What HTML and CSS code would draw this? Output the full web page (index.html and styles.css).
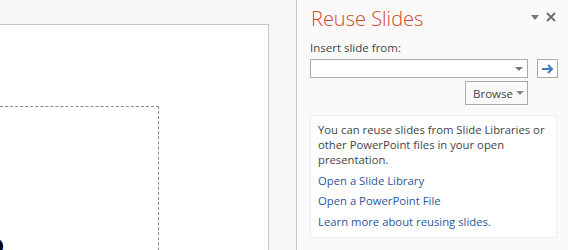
FILE: index.html
```html
<!DOCTYPE html>
<html lang="en">
<head>
    <meta charset="UTF-8">
    <title>Reuse Slides</title>
    <link rel="stylesheet" href="styles.css">
</head>
<body>
    <div class="app">
        <!-- slide editing area -->
        <div class="stage">
            <div class="slide">
                <div class="placeholder">
                    <span class="ph-text">o</span>
                </div>
            </div>
        </div>

        <!-- task pane -->
        <div class="pane">
            <div class="pane-head">
                <h1 class="pane-title">Reuse Slides</h1>
                <div class="pane-tools">
                    <span class="pane-menu"></span>
                    <svg class="pane-close" width="10" height="10" viewBox="0 0 10 10">
                        <path d="M1 1L9 9M9 1L1 9" stroke="#6a6a6a" stroke-width="1.8"/>
                    </svg>
                </div>
            </div>

            <label class="field-label">Insert slide from:</label>
            <div class="field-row">
                <div class="combo"><span class="caret"></span></div>
                <button class="go-btn">
                    <svg width="14" height="12" viewBox="0 0 14 12">
                        <path d="M1 6H11M7 2L11 6L7 10" stroke="#3d7cc4" stroke-width="2" fill="none"/>
                    </svg>
                </button>
            </div>
            <div class="browse-row">
                <button class="browse-btn">Browse <span class="caret"></span></button>
            </div>

            <div class="info">
                <p>You can reuse slides from Slide Libraries or other PowerPoint files in your open presentation.</p>
                <a href="#" class="link">Open a Slide Library</a>
                <a href="#" class="link">Open a PowerPoint File</a>
                <a href="#" class="link more">Learn more about reusing slides.</a>
            </div>
        </div>
    </div>
</body>
</html>
```

FILE: styles.css
```css
/* base */
body {
    margin: 0;
    font-family: "Open Sans", "Noto Sans", sans-serif;
    color: #444;
    overflow: hidden;
}
.app {
    display: flex;
    width: 568px;
    height: 250px;
}

/* slide area */
.stage {
    width: 297px;
    background: #f6f6f6;
    border-right: 1px solid #c8c8c8;
    padding-top: 24px;
    box-sizing: border-box;
    overflow: hidden;
}
.slide {
    width: 269px;
    height: 240px;
    background: #fff;
    border-top: 1px solid #c6c6c6;
    border-right: 1px solid #c6c6c6;
    box-sizing: border-box;
    position: relative;
    overflow: hidden;
}
.placeholder {
    position: absolute;
    left: -10px;
    top: 81px;
    width: 169px;
    height: 200px;
    border: 1px dashed #8a8a8a;
    box-sizing: border-box;
}
.ph-text {
    position: absolute;
    left: -4px;
    top: 122px;
    font-family: "Liberation Sans", sans-serif;
    font-weight: bold;
    font-size: 28px;
    color: #000;
}

/* task pane */
.pane {
    flex: 1;
    background: #fafafa;
    padding: 0 10px 0 13px;
}
.pane-head {
    display: flex;
    justify-content: space-between;
    align-items: flex-start;
}
.pane-title {
    margin: 6px 0 0 1px;
    font-weight: 300;
    font-size: 20px;
    color: #d24726;
    line-height: 26px;
}
.pane-tools {
    display: flex;
    align-items: center;
    gap: 7px;
    margin-top: 12px;
    margin-right: 2px;
}
.pane-menu {
    width: 0;
    height: 0;
    border-left: 4px solid transparent;
    border-right: 4px solid transparent;
    border-top: 5px solid #777;
}
.pane-close {
    display: block;
}
.field-label {
    display: block;
    margin-top: 8px;
    font-size: 11.5px;
    line-height: 16px;
    color: #444;
}
.field-row {
    display: flex;
    gap: 9px;
    margin-top: 3px;
}
.combo {
    width: 218px;
    height: 19px;
    border: 1px solid #ababab;
    background: #fff;
    box-sizing: border-box;
    display: flex;
    justify-content: flex-end;
    align-items: center;
    padding-right: 4px;
}
.caret {
    display: inline-block;
    width: 0;
    height: 0;
    border-left: 4px solid transparent;
    border-right: 4px solid transparent;
    border-top: 4px solid #777;
}
.go-btn {
    width: 21px;
    height: 19px;
    border: 1px solid #ababab;
    background: #fff;
    padding: 0;
    box-sizing: border-box;
    display: flex;
    align-items: center;
    justify-content: center;
}
.browse-row {
    width: 218px;
    display: flex;
    justify-content: flex-end;
    margin-top: 3px;
}
.browse-btn {
    width: 63px;
    height: 24px;
    border: 1px solid #ababab;
    background: #fafafa;
    box-sizing: border-box;
    font-family: inherit;
    font-size: 11.5px;
    color: #444;
    padding: 0 0 0 4px;
    display: flex;
    align-items: center;
    justify-content: center;
    gap: 3px;
}
.browse-btn .caret {
    border-top-color: #888;
}
.info {
    margin-top: 10px;
    width: 247px;
    height: 123px;
    box-sizing: border-box;
    background: #fff;
    border: 1px solid #eeeeee;
    padding: 6px 6px 0 7px;
}
.info p {
    margin: 0 0 6px 0;
    font-size: 11.3px;
    line-height: 15px;
    color: #444;
}
.link {
    display: block;
    color: #2b579a;
    text-decoration: none;
    font-size: 11.3px;
    line-height: 15px;
    margin-bottom: 5px;
}
.link.more {
    margin-top: 6px;
}
```
